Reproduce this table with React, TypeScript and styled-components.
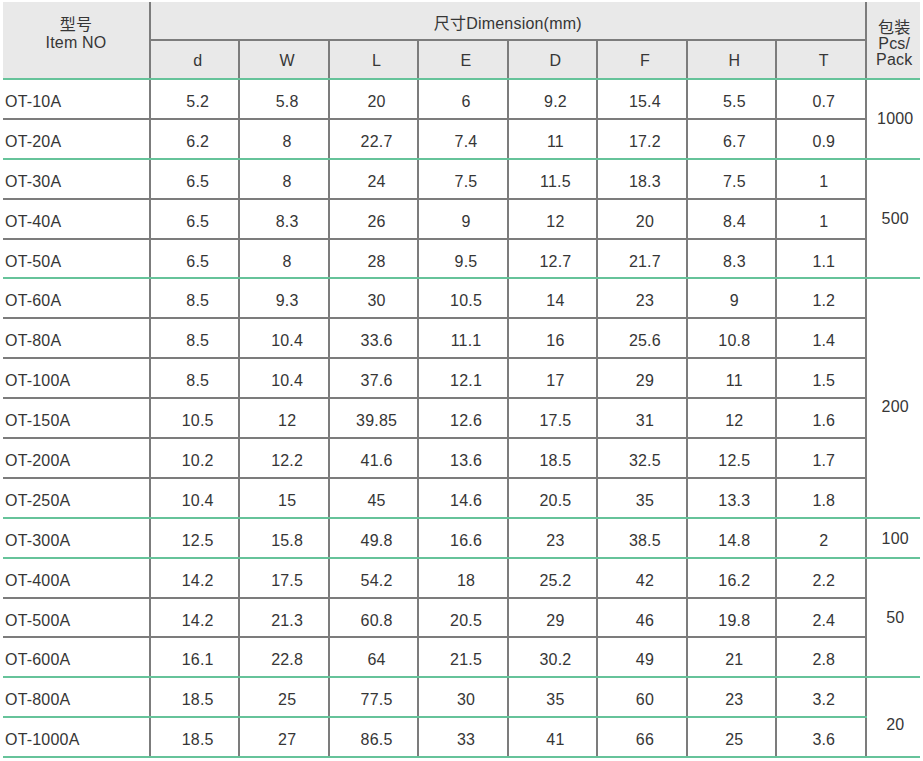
import styled, { createGlobalStyle } from 'styled-components';

type Pack = { value: string; span: number; nudge?: number };

const rows: string[][] = [
  ['OT-10A', '5.2', '5.8', '20', '6', '9.2', '15.4', '5.5', '0.7'],
  ['OT-20A', '6.2', '8', '22.7', '7.4', '11', '17.2', '6.7', '0.9'],
  ['OT-30A', '6.5', '8', '24', '7.5', '11.5', '18.3', '7.5', '1'],
  ['OT-40A', '6.5', '8.3', '26', '9', '12', '20', '8.4', '1'],
  ['OT-50A', '6.5', '8', '28', '9.5', '12.7', '21.7', '8.3', '1.1'],
  ['OT-60A', '8.5', '9.3', '30', '10.5', '14', '23', '9', '1.2'],
  ['OT-80A', '8.5', '10.4', '33.6', '11.1', '16', '25.6', '10.8', '1.4'],
  ['OT-100A', '8.5', '10.4', '37.6', '12.1', '17', '29', '11', '1.5'],
  ['OT-150A', '10.5', '12', '39.85', '12.6', '17.5', '31', '12', '1.6'],
  ['OT-200A', '10.2', '12.2', '41.6', '13.6', '18.5', '32.5', '12.5', '1.7'],
  ['OT-250A', '10.4', '15', '45', '14.6', '20.5', '35', '13.3', '1.8'],
  ['OT-300A', '12.5', '15.8', '49.8', '16.6', '23', '38.5', '14.8', '2'],
  ['OT-400A', '14.2', '17.5', '54.2', '18', '25.2', '42', '16.2', '2.2'],
  ['OT-500A', '14.2', '21.3', '60.8', '20.5', '29', '46', '19.8', '2.4'],
  ['OT-600A', '16.1', '22.8', '64', '21.5', '30.2', '49', '21', '2.8'],
  ['OT-800A', '18.5', '25', '77.5', '30', '35', '60', '23', '3.2'],
  ['OT-1000A', '18.5', '27', '86.5', '33', '41', '66', '25', '3.6'],
];

const packs: Record<number, Pack> = {
  0: { value: '1000', span: 2 },
  2: { value: '500', span: 3 },
  5: { value: '200', span: 6, nudge: 18 },
  11: { value: '100', span: 1, nudge: 3 },
  12: { value: '50', span: 3 },
  15: { value: '20', span: 2, nudge: 16 },
};

// rows whose bottom line is green
const greenRows = [1, 4, 10, 11, 14, 15, 16];

const dims = ['d', 'W', 'L', 'E', 'D', 'F', 'H', 'T'];

const GRAY = '2px solid #7c7c7c';
const GREEN = '2px solid #66c39a';

const GlobalStyle = createGlobalStyle`
  body {
    margin: 0;
    background: #ffffff;
    font-family: "Liberation Sans", Arial, "Noto Sans CJK SC", sans-serif;
    color: #363636;
  }
`;

const Page = styled.div`
  padding: 2px 0 0 3px;
  width: 923px;
  height: 761px;
  box-sizing: border-box;
  overflow: hidden;
`;

const Table = styled.table`
  width: 917px;
  border-collapse: collapse;
  table-layout: fixed;
  font-size: 16px;
  letter-spacing: 0.2px;
`;

const HeadRow = styled.tr`
  background: #e9e9e9;
`;

const ItemHead = styled.th`
  font-weight: 400;
  vertical-align: top;
  padding: 14px 0 0;
  line-height: 18px;
  border-right: ${GRAY};
  border-bottom: ${GREEN};
`;

const DimTitle = styled.th`
  font-weight: 400;
  height: 38px;
  padding: 3px 0 0 0;
  box-sizing: border-box;
  border-bottom: ${GRAY};
`;

const PackHead = styled.th`
  font-weight: 400;
  padding: 7px 0 0 2px;
  line-height: 16px;
  border-left: ${GRAY};
  border-bottom: ${GREEN};
`;

const DimHead = styled.th`
  font-weight: 400;
  height: 39px;
  box-sizing: border-box;
  padding: 3px 0 0 6px;
  border-right: ${GRAY};
  border-bottom: ${GREEN};
`;

const Row = styled.tr<{ $green: boolean }>`
  height: 39.9px;
  & > td.cell {
    border-bottom: ${({ $green }) => ($green ? GREEN : GRAY)};
  }
`;

const ItemCell = styled.td`
  padding: 6px 0 0 2px;
  border-right: ${GRAY};
`;

const NumCell = styled.td`
  text-align: center;
  padding: 6px 0 0 6px;
  border-right: ${GRAY};
`;

const PackCell = styled.td<{ $nudge: number }>`
  text-align: center;
  padding: ${({ $nudge }) => $nudge}px 0 0 4px;
  border-bottom: ${GREEN};
`;

const App = () => {
  return (
    <Page>
      <GlobalStyle />
      <Table>
        <colgroup>
          <col style={{ width: 147 }} />
          {dims.map((d) => (
            <col key={d} style={{ width: 89.45 }} />
          ))}
          <col />
        </colgroup>
        <thead>
          <HeadRow>
            <ItemHead rowSpan={2}>
              型号
              <br />
              Item NO
            </ItemHead>
            <DimTitle colSpan={8}>尺寸Dimension(mm)</DimTitle>
            <PackHead rowSpan={2}>
              包装
              <br />
              Pcs/
              <br />
              Pack
            </PackHead>
          </HeadRow>
          <HeadRow>
            {dims.map((d) => (
              <DimHead key={d}>{d}</DimHead>
            ))}
          </HeadRow>
        </thead>
        <tbody>
          {rows.map((r, i) => (
            <Row key={r[0]} $green={greenRows.includes(i)}>
              <ItemCell className="cell">{r[0]}</ItemCell>
              {r.slice(1).map((v, j) => (
                <NumCell className="cell" key={j}>
                  {v}
                </NumCell>
              ))}
              {packs[i] && (
                <PackCell rowSpan={packs[i].span} $nudge={packs[i].nudge ?? 0}>
                  {packs[i].value}
                </PackCell>
              )}
            </Row>
          ))}
        </tbody>
      </Table>
    </Page>
  );
};

export default App;
